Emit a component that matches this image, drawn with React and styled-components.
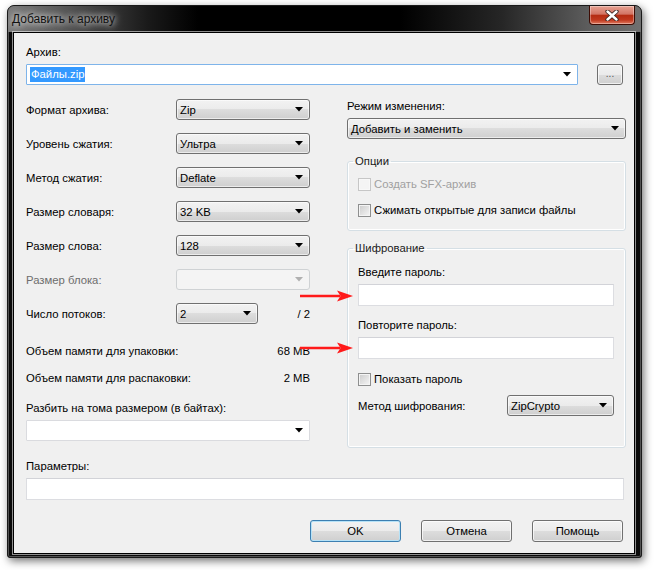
import React from 'react'
import styled, { createGlobalStyle, css } from 'styled-components'

const Global = createGlobalStyle`
  html, body {
    margin: 0;
    background: #ffffff;
  }
  body {
    font-family: "Liberation Sans", Arial, sans-serif;
    font-size: 11.3px;
    color: #000;
  }
`

const Page = styled.div`
  width: 655px;
  height: 570px;
  padding: 5px 0 0 7px;
  box-sizing: border-box;
`

const Window = styled.div`
  width: 635px;
  height: 553px;
  box-sizing: border-box;
  display: flex;
  flex-direction: column;
  background: #0a0a0a;
  border: 1px solid #1a1a1a;
  border-radius: 7px 7px 3px 3px;
  box-shadow: inset 0 0 0 1px rgba(255, 255, 255, 0.3), 2px 3px 9px rgba(0, 0, 0, 0.55);
  overflow: hidden;
`

const TitleBar = styled.div`
  height: 26px;
  flex: none;
  display: flex;
  justify-content: space-between;
  align-items: flex-start;
  padding: 0 6px 0 4px;
  background: linear-gradient(90deg, #7a7a7a 0%, #5a5a5a 8%, #1a1a1a 22%, #000 30%, #000 62%, #262626 78%, #5e5e5e 92%, #707070 100%);
`

const Title = styled.div`
  line-height: 26px;
  font-size: 12px;
  color: #111;
  text-shadow: 0 0 6px rgba(255, 255, 255, 0.9), 0 0 10px rgba(255, 255, 255, 0.7);
`

const CloseButton = styled.div`
  width: 46px;
  height: 19px;
  box-sizing: border-box;
  display: flex;
  align-items: center;
  justify-content: center;
  border: 1px solid #3d0c04;
  border-top: none;
  border-radius: 0 0 4px 4px;
  background: linear-gradient(#e7a393 0%, #d27464 45%, #b52c12 52%, #c0391f 78%, #e07a60 100%);
  box-shadow: inset 0 0 0 1px rgba(255, 255, 255, 0.35);
`

const Client = styled.div`
  position: relative;
  flex: 1;
  margin: 0 6px 6px 5px;
  padding: 12px 10px 11px 12px;
  background: #f0f0f0;
  border: 1px solid #000;
  box-shadow: 0 0 0 1px rgba(255, 255, 255, 0.55);
  display: flex;
  flex-direction: column;
`

const Label = styled.div`
  line-height: 14px;
  height: 14px;
  white-space: nowrap;
  color: ${p => (p.$disabled ? '#6d6d6d' : '#000')};
  margin-top: ${p => p.$mt || 0}px;
`

const Row = styled.div`
  display: flex;
  align-items: center;
  justify-content: space-between;
  margin-top: ${p => p.$mt || 0}px;
`

const ArchiveRow = styled(Row)`
  margin-top: 5px;
  padding-right: 1px;
`

const Combo = styled.div`
  width: ${p => p.$w}px;
  height: 21px;
  box-sizing: border-box;
  display: flex;
  align-items: center;
  justify-content: space-between;
  padding: 0 6px 0 3px;
  border-radius: 3px;
  ${p =>
    p.$kind === 'edit'
      ? css`
          background: #fff;
          border: 1px solid ${p.$focus ? '#7eb4ea' : '#dadbdf'};
          border-radius: 1px;
        `
      : p.$kind === 'disabled'
        ? css`
            background: #f4f4f4;
            border: 1px solid #cfd2d4;
          `
        : css`
            background: linear-gradient(#f2f2f2 0%, #ebebeb 50%, #dddddd 50%, #cfcfcf 100%);
            border: 1px solid #707070;
            box-shadow: inset 0 0 0 1px rgba(255, 255, 255, 0.6);
          `}
`

const Selected = styled.span`
  background: #3399ff;
  color: #fff;
  padding: 0 1px;
  line-height: 15px;
`

const Columns = styled.div`
  display: flex;
  gap: 37px;
  margin-top: 14px;
`

const LeftCol = styled.div`
  width: 284px;
  display: flex;
  flex-direction: column;
`

const RightCol = styled.div`
  width: 279px;
  display: flex;
  flex-direction: column;
`

const FieldRow = styled.div`
  display: flex;
  align-items: center;
  justify-content: space-between;
  height: 21px;
  margin-top: ${p => p.$mt ?? 13}px;
`

const InfoRow = styled.div`
  display: flex;
  justify-content: space-between;
  line-height: 14px;
  margin-top: ${p => p.$mt}px;
`

const Group = styled.fieldset`
  margin: ${p => p.$mt}px 0 0 0;
  padding: ${p => p.$pt}px 11px ${p => p.$pb}px 10px;
  min-inline-size: 0;
  border: 1px solid #d5dfe5;
  border-radius: 3px;
  box-shadow: inset 0 0 0 1px #fff;
  display: flex;
  flex-direction: column;
`

const Legend = styled.legend`
  padding: 0 2px;
  margin-left: -5px;
  line-height: 14px;
  color: #1a1a1a;
`

const Check = styled.label`
  display: flex;
  align-items: center;
  gap: 3px;
  line-height: 14px;
  height: 14px;
  white-space: nowrap;
  color: ${p => (p.$disabled ? '#a0a0a0' : '#000')};
  margin-top: ${p => p.$mt || 0}px;
`

const Box = styled.span`
  width: 13px;
  height: 13px;
  box-sizing: border-box;
  border: 1px solid ${p => (p.$disabled ? '#c6c6c6' : '#8e8f8f')};
  background: ${p =>
    p.$disabled
      ? '#f4f4f4'
      : 'linear-gradient(135deg, #cbcbcb 0%, #f6f6f6 100%)'};
  box-shadow: inset 0 0 0 1px ${p => (p.$disabled ? '#f8f8f8' : '#f4f4f4')};
`

const TextInput = styled.div`
  height: 22px;
  box-sizing: border-box;
  background: #fff;
  border: 1px solid #dcdde1;
  border-top-color: #d2d3d8;
  margin-top: ${p => p.$mt || 0}px;
`

const Buttons = styled.div`
  display: flex;
  justify-content: flex-end;
  gap: 20px;
  margin-top: 20px;
  padding-right: 1px;
`

const Button = styled.div`
  width: ${p => p.$w || 91}px;
  height: 22px;
  box-sizing: border-box;
  display: flex;
  align-items: center;
  justify-content: center;
  border-radius: 3px;
  background: linear-gradient(#f2f2f2 0%, #ebebeb 50%, #dddddd 50%, #cfcfcf 100%);
  border: 1px solid ${p => (p.$default ? '#3c7fb1' : '#707070')};
  box-shadow: inset 0 0 0 1px ${p => (p.$default ? '#b6e2f7' : 'rgba(255,255,255,0.7)')};
  color: #000;
`

const DotsButton = styled(Button)`
  height: 21px;
  font-size: 10px;
  color: #555;
  padding-bottom: 3px;
`

const RedArrow = styled.svg`
  position: absolute;
  left: 286px;
  top: ${p => p.$top}px;
`

function DropArrow({ color = '#000' }) {
  return (
    <svg width="8" height="5" viewBox="0 0 8 5">
      <path d="M0 0 H8 L4 4.5 Z" fill={color} />
    </svg>
  )
}

function CloseX() {
  return (
    <svg width="14" height="11" viewBox="0 0 14 11">
      <path d="M2.5 1.5 L11.5 9.5 M11.5 1.5 L2.5 9.5" stroke="#3a2420" strokeWidth="4.2" strokeLinecap="round" />
      <path d="M2.5 1.5 L11.5 9.5 M11.5 1.5 L2.5 9.5" stroke="#ffffff" strokeWidth="2.4" strokeLinecap="round" />
    </svg>
  )
}

function Arrow({ top }) {
  return (
    <RedArrow $top={top} width="53" height="12" viewBox="0 0 53 12">
      <path d="M0 6 H40" stroke="#ff1a1a" strokeWidth="2.6" />
      <path d="M37 0.5 L53 6 L37 11.5 L40.5 6 Z" fill="#ff1a1a" />
    </RedArrow>
  )
}

const leftFields = [
  { label: 'Формат архива:', value: 'Zip' },
  { label: 'Уровень сжатия:', value: 'Ультра' },
  { label: 'Метод сжатия:', value: 'Deflate' },
  { label: 'Размер словаря:', value: '32 KB' },
  { label: 'Размер слова:', value: '128' },
  { label: 'Размер блока:', value: '', disabled: true },
]

export default function App() {
  return (
    <Page>
      <Global />
      <Window>
        <TitleBar>
          <Title>Добавить к архиву</Title>
          <CloseButton>
            <CloseX />
          </CloseButton>
        </TitleBar>
        <Client>
          <Label>Архив:</Label>
          <ArchiveRow>
            <Combo $w={552} $kind="edit" $focus>
              <Selected>Файлы.zip</Selected>
              <DropArrow />
            </Combo>
            <DotsButton $w={26}>...</DotsButton>
          </ArchiveRow>

          <Columns>
            <LeftCol>
              {leftFields.map((f, i) => (
                <FieldRow key={f.label} $mt={i === 0 ? 0 : 13}>
                  <Label $disabled={f.disabled}>{f.label}</Label>
                  <Combo $w={134} $kind={f.disabled ? 'disabled' : 'button'}>
                    <span>{f.value}</span>
                    <DropArrow color={f.disabled ? '#b0b0b0' : '#000'} />
                  </Combo>
                </FieldRow>
              ))}
              <FieldRow>
                <Label>Число потоков:</Label>
                <Row>
                  <Combo $w={82}>
                    <span>2</span>
                    <DropArrow />
                  </Combo>
                  <Label style={{ width: 52, textAlign: 'right' }}>/ 2</Label>
                </Row>
              </FieldRow>
              <InfoRow $mt={20}>
                <span>Объем памяти для упаковки:</span>
                <span>68 MB</span>
              </InfoRow>
              <InfoRow $mt={13}>
                <span>Объем памяти для распаковки:</span>
                <span>2 MB</span>
              </InfoRow>
              <Label $mt={16}>Разбить на тома размером (в байтах):</Label>
              <Row $mt={5}>
                <Combo $w={284} $kind="edit">
                  <span />
                  <DropArrow />
                </Combo>
              </Row>
            </LeftCol>

            <RightCol>
              <Label>Режим изменения:</Label>
              <Row $mt={5}>
                <Combo $w={279}>
                  <span>Добавить и заменить</span>
                  <DropArrow />
                </Combo>
              </Row>
              <Group $mt={15} $pt={9} $pb={13}>
                <Legend>Опции</Legend>
                <Check $disabled>
                  <Box $disabled />
                  Создать SFX-архив
                </Check>
                <Check $mt={12}>
                  <Box />
                  Сжимать открытые для записи файлы
                </Check>
              </Group>
              <Group $mt={10} $pt={10} $pb={31}>
                <Legend>Шифрование</Legend>
                <Label>Введите пароль:</Label>
                <TextInput $mt={5} />
                <Label $mt={12}>Повторите пароль:</Label>
                <TextInput $mt={5} />
                <Check $mt={13}>
                  <Box />
                  Показать пароль
                </Check>
                <FieldRow $mt={9}>
                  <Label>Метод шифрования:</Label>
                  <Combo $w={107}>
                    <span>ZipCrypto</span>
                    <DropArrow />
                  </Combo>
                </FieldRow>
              </Group>
            </RightCol>
          </Columns>

          <Label $mt={11}>Параметры:</Label>
          <TextInput $mt={5} />
          <Buttons>
            <Button $default>OK</Button>
            <Button>Отмена</Button>
            <Button>Помощь</Button>
          </Buttons>

          <Arrow top={257} />
          <Arrow top={309} />
        </Client>
      </Window>
    </Page>
  )
}
